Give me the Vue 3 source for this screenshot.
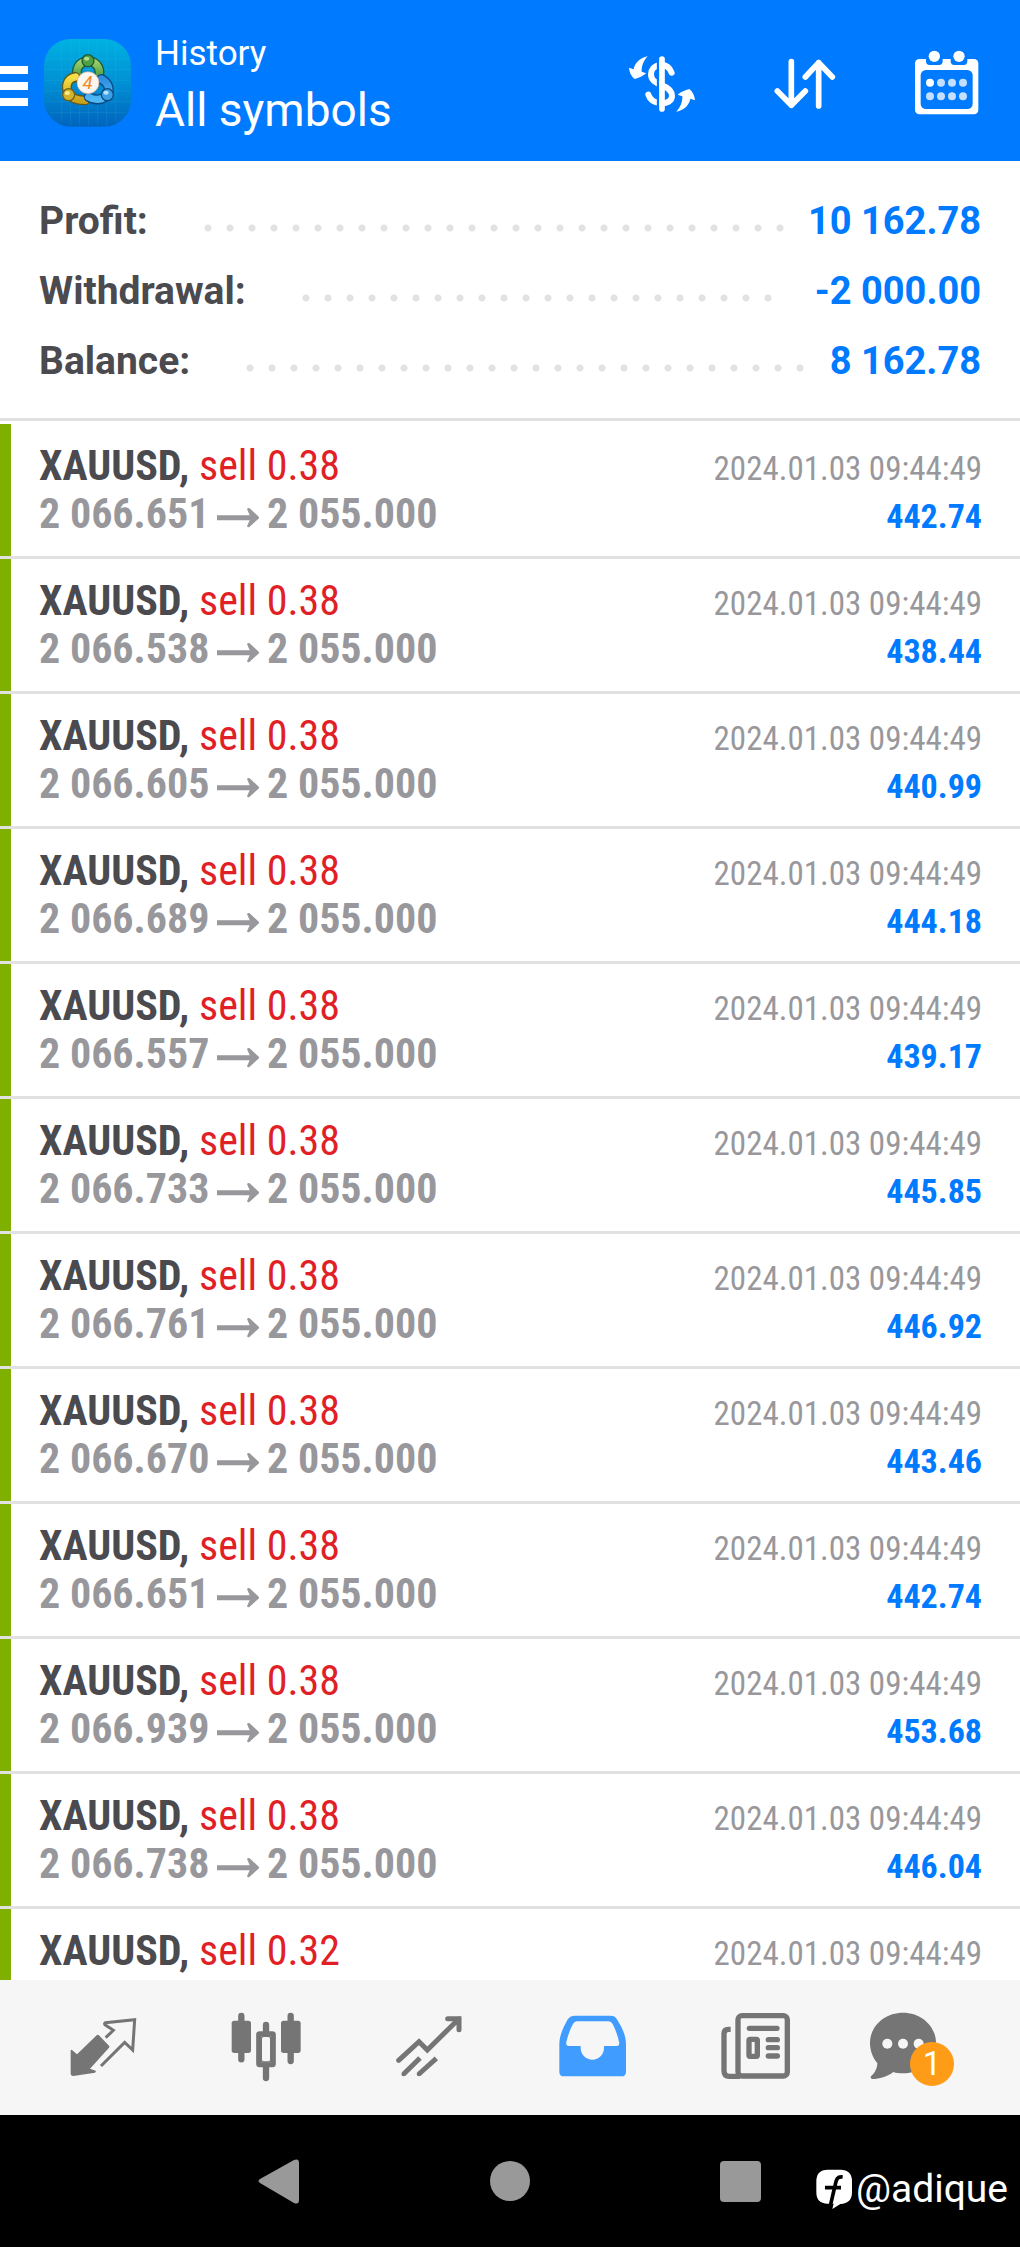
<script setup>
const summary = [
  { label: 'Profit:', value: '10 162.78' },
  { label: 'Withdrawal:', value: '-2 000.00' },
  { label: 'Balance:', value: '8 162.78' },
]

const time = '2024.01.03 09:44:49'
const trades = [
  { volume: '0.38', open: '2 066.651', profit: '442.74' },
  { volume: '0.38', open: '2 066.538', profit: '438.44' },
  { volume: '0.38', open: '2 066.605', profit: '440.99' },
  { volume: '0.38', open: '2 066.689', profit: '444.18' },
  { volume: '0.38', open: '2 066.557', profit: '439.17' },
  { volume: '0.38', open: '2 066.733', profit: '445.85' },
  { volume: '0.38', open: '2 066.761', profit: '446.92' },
  { volume: '0.38', open: '2 066.670', profit: '443.46' },
  { volume: '0.38', open: '2 066.651', profit: '442.74' },
  { volume: '0.38', open: '2 066.939', profit: '453.68' },
  { volume: '0.38', open: '2 066.738', profit: '446.04' },
  { volume: '0.32', open: '', profit: '' },
]
</script>

<template>
  <div class="app">
    <header class="bar">
      <button class="menu" aria-label="Menu"><i></i><i></i><i></i></button>
      <svg class="logo" viewBox="132 120 261 261" aria-hidden="true">
        <defs>
          <linearGradient id="tile" x1="0" y1="0" x2="0" y2="1">
            <stop offset="0" stop-color="#00b2e2" />
            <stop offset="0.5" stop-color="#0090d4" />
            <stop offset="1" stop-color="#0064bd" />
          </linearGradient>
          <linearGradient id="green" x1="0" y1="0" x2="0" y2="1">
            <stop offset="0" stop-color="#9fd06a" />
            <stop offset="1" stop-color="#3f9440" />
          </linearGradient>
          <linearGradient id="gold" x1="0" y1="0" x2="0" y2="1">
            <stop offset="0" stop-color="#f6e04a" />
            <stop offset="1" stop-color="#c9a21c" />
          </linearGradient>
          <linearGradient id="sky" x1="0" y1="0" x2="0" y2="1">
            <stop offset="0" stop-color="#2f8fe0" />
            <stop offset="1" stop-color="#4fb8f5" />
          </linearGradient>
        </defs>
        <rect x="132" y="120" width="261" height="263" rx="80" fill="url(#tile)" />
        <path
          d="M185 135V368M212 122V380M239 122V380M266 122V380M293 122V380M320 122V380M347 135V368M140 180H386M134 212H392M134 244H392M134 276H392M136 308H390M150 340H376"
          stroke="#5cc8ee" stroke-opacity="0.2" stroke-width="2" fill="none"
        />
        <g fill="none" stroke-linecap="round">
          <path d="M236 238C222 212 238 188 264 186C292 188 306 212 294 240" stroke="#1d5b3c" stroke-width="30" />
          <path d="M236 238C222 212 238 188 264 186C292 188 306 212 294 240" stroke="url(#green)" stroke-width="22" />
          <path d="M226 234C202 238 194 262 206 284C216 302 238 304 256 304" stroke="#5c5a1c" stroke-width="30" />
          <path d="M226 234C202 238 194 262 206 284C216 302 238 304 256 304" stroke="url(#gold)" stroke-width="22" />
          <path d="M304 240C326 252 334 274 318 292C304 304 282 304 266 294" stroke="#0b4a86" stroke-width="30" />
          <path d="M304 240C326 252 334 274 318 292C304 304 282 304 266 294" stroke="url(#sky)" stroke-width="22" />
        </g>
        <circle cx="264" cy="185" r="18" fill="#4f9f46" stroke="#1f5c33" stroke-width="4" />
        <ellipse cx="260" cy="179" rx="8" ry="6" fill="#b4dc8c" />
        <circle cx="206" cy="287" r="18" fill="#d3b32c" stroke="#6f601b" stroke-width="4" />
        <ellipse cx="202" cy="282" rx="8" ry="6" fill="#f6ec90" />
        <circle cx="322" cy="287" r="18" fill="#3c9fe4" stroke="#0d4a82" stroke-width="4" />
        <ellipse cx="318" cy="281" rx="8" ry="6" fill="#b6e2fb" />
        <circle cx="264" cy="251" r="33" fill="#fbf6f0" stroke="#c9a48c" stroke-width="2" />
        <text x="263" y="271" class="mark">4</text>
      </svg>
      <div class="titles">
        <div class="sub">History</div>
        <h1>All symbols</h1>
      </div>
      <div class="actions">
        <button aria-label="Currency">
          <svg viewBox="78 75 213 213">
            <path
              d="M215 158C208 138 192 134 180 135C162 137 153 150 153 163C153 181 166 188 186 196C205 203 216 212 216 228C216 243 200 251 184 250C165 249 150 240 145 224"
              fill="none" stroke="#fff" stroke-width="18" stroke-linecap="round"
            />
            <path d="M174 105V278" stroke="#007aff" stroke-width="7" />
            <path d="M186 117V267" stroke="#fff" stroke-width="17" stroke-linecap="round" />
            <path d="M143 109C118 114 104 130 101 148L87 143C88 158 95 170 104 177C116 174 130 168 139 160L125 155C124 138 132 120 143 109Z" fill="#fff" />
            <path d="M229 275C254 270 268 254 271 236L285 241C284 226 277 214 268 207C256 210 242 216 233 224L247 229C248 246 240 264 229 275Z" fill="#fff" />
          </svg>
        </button>
        <button aria-label="Sort">
          <svg viewBox="504 75 213 213">
            <path
              d="M574 125V256M532 213L574 256L616 213M656 258V128M616 171L656 128L697 171"
              fill="none" stroke="#fff" stroke-width="17" stroke-linecap="round" stroke-linejoin="round"
            />
          </svg>
        </button>
        <button aria-label="Period">
          <svg viewBox="930 75 213 213">
            <rect x="945" y="117" width="190" height="166" rx="13" fill="#fff" />
            <rect x="962" y="150" width="156" height="117" rx="16" fill="#007aff" />
            <path d="M978 112H1028V124Q1028 135 1017 135H989Q978 135 978 124ZM1052 112H1102V124Q1102 135 1091 135H1063Q1052 135 1052 124Z" fill="#007aff" />
            <circle cx="1003" cy="109" r="17" fill="#fff" />
            <circle cx="1077" cy="109" r="17" fill="#fff" />
            <circle cx="990" cy="188" r="12" fill="#fff" />
            <g fill="#c4dfff">
              <circle cx="1023" cy="188" r="12" />
              <circle cx="1056" cy="188" r="12" />
              <circle cx="1089" cy="188" r="12" />
              <circle cx="990" cy="229" r="12" />
              <circle cx="1023" cy="229" r="12" />
              <circle cx="1056" cy="229" r="12" />
              <circle cx="1089" cy="229" r="12" />
            </g>
          </svg>
        </button>
      </div>
    </header>

    <dl class="summary">
      <div v-for="s in summary" :key="s.label" class="sum">
        <dt>{{ s.label }}</dt>
        <span class="dots" aria-hidden="true"><i v-for="n in 40" :key="n"></i></span>
        <dd>{{ s.value }}</dd>
      </div>
    </dl>

    <ul class="trades">
      <li v-for="(t, i) in trades" :key="i">
        <div class="line">
          <span class="deal"><b>XAUUSD,</b> <span class="sell">sell {{ t.volume }}</span></span>
          <time>{{ time }}</time>
        </div>
        <div v-if="t.open" class="line">
          <span class="prices">
            <span class="open">{{ t.open }}</span>
            <svg viewBox="0 0 126 60" aria-label="to">
              <path d="M0 22H98L90 3Q94 -2 98 1L126 27V31L98 56Q94 60 90 55L98 37H0Z" fill="currentColor" />
            </svg>
            <span>2 055.000</span>
          </span>
          <span class="profit">{{ t.profit }}</span>
        </div>
      </li>
    </ul>

    <nav class="tabs">
      <button aria-label="Quotes">
        <svg viewBox="204 396 213 213">
          <path d="M291 465Q293 463 296 465L327 497Q330 500 327 503L270 566L287 572Q289 575 285 578L220 588Q212 588 212 580V511Q214 508 217 511L231 523Z" fill="#757575" />
          <path
            d="M317 473L340 451L316 435Q311 431 316 428L404 419L398 510L374 487L303 558"
            fill="none" stroke="#757575" stroke-width="9"
          />
        </svg>
      </button>
      <button aria-label="Charts">
        <svg viewBox="693 396 213 213" fill="#757575">
          <rect x="695" y="422" width="58" height="97" rx="8" />
          <path d="M724 408V538M872 408V543M798 435V455M798 560V594" stroke="#757575" stroke-width="19" stroke-linecap="round" />
          <rect x="843" y="422" width="59" height="97" rx="8" />
          <rect x="776" y="461" width="44" height="93" rx="3" fill="#f6f6f6" stroke="#757575" stroke-width="15" />
          <rect x="784" y="469" width="28" height="77" rx="7" fill="#f6f6f6" stroke="#757575" stroke-width="4" />
        </svg>
      </button>
      <button aria-label="Trade">
        <svg viewBox="162 156 213 213">
          <path
            d="M176 301L237 245L262 270L357 176M323 176H357V209"
            fill="none" stroke="#757575" stroke-width="15" stroke-linecap="round"
          />
          <path d="M191 342L240 294M237 342L289 295" fill="none" stroke="#757575" stroke-width="15" />
          <circle cx="191" cy="342" r="7" fill="#757575" />
          <circle cx="237" cy="342" r="7" fill="#757575" />
        </svg>
      </button>
      <button aria-label="History" aria-current="page">
        <svg viewBox="651 156 213 213">
          <path
            fill-rule="evenodd" fill="#409cff"
            d="M705 167H811Q827 167 832 180C846 203 858 225 858 254V335Q858 349 844 349H672Q658 349 658 335V254C658 225 670 203 682 180Q689 167 705 167ZM711 184Q703 184 699 192C690 208 684 226 679 246Q677 258 687 258H722V264A35 35 0 0 0 792 264V258H830Q840 258 837 246C833 226 826 208 818 192Q814 184 806 184Z"
          />
        </svg>
      </button>
      <button aria-label="News">
        <svg viewBox="120 156 213 213" fill="none" stroke="#757575" stroke-width="16">
          <rect x="174" y="167" width="148" height="181" rx="12" />
          <path d="M152 208H145Q132 208 132 222V332Q132 349 148 349H180" />
          <path d="M208 205H291M265 239H292M265 263H292M265 288H292" stroke-linecap="round" />
          <rect x="207" y="238" width="25" height="51" rx="3" />
        </svg>
      </button>
      <button class="chat" aria-label="Messages">
        <svg viewBox="609 156 213 213">
          <path
            d="M669 158C725 158 768 199 768 249C768 299 725 340 669 340C658 340 648 339 640 336C622 350 598 357 577 357Q570 356 573 349C584 340 592 325 592 309C578 293 570 272 570 249C570 199 613 158 669 158Z"
            fill="#757575"
          />
          <g fill="#f6f6f6">
            <circle cx="622" cy="251" r="15" />
            <circle cx="669" cy="251" r="15" />
            <circle cx="716" cy="251" r="15" />
          </g>
        </svg>
        <span class="badge">1</span>
      </button>
    </nav>

    <footer class="system">
      <button aria-label="Back">
        <svg viewBox="0 0 44 44"><path d="M3 20L37 1Q42 -1 42 4V41Q42 46 37 44L3 24Q0 22 3 20Z" fill="#999" /></svg>
      </button>
      <button aria-label="Home">
        <svg viewBox="0 0 44 44"><circle cx="22" cy="22" r="20" fill="#999" /></svg>
      </button>
      <button aria-label="Recent apps">
        <svg viewBox="0 0 44 44"><rect x="1" y="2" width="41" height="41" rx="4" fill="#999" /></svg>
      </button>
      <div class="handle">
        <svg viewBox="405 184 108 120" aria-hidden="true">
          <path d="M440 186H478Q513 186 513 221V254Q513 288 478 289L454 304L458 288H440Q406 288 406 254V221Q406 186 440 186Z" fill="#fff" />
          <path d="M485 208C468 206 466 216 463 230L449 290M432 240H480" fill="none" stroke="#000" stroke-width="11" />
        </svg>
        <span>@adique</span>
      </div>
    </footer>
  </div>
</template>

<style>
body {
  margin: 0;
  background: #fff;
}
</style>

<style scoped>
.app {
  display: flex;
  flex-direction: column;
  height: 100vh;
  overflow: hidden;
  font-family: Roboto, sans-serif;
  color: #4a4a4f;
}
button {
  display: block;
  flex: none;
  padding: 0;
  border: 0;
  background: none;
}
svg {
  display: block;
  overflow: visible;
}
.bar {
  display: flex;
  flex: none;
  align-items: center;
  box-sizing: border-box;
  height: 161px;
  padding-right: 39px;
  background: #007aff;
  color: #fff;
}
.menu {
  display: flex;
  flex-direction: column;
  gap: 8px;
  width: 28px;
  padding-top: 10px;
}
.menu i {
  height: 8px;
  background: #fff;
}
.logo {
  flex: none;
  width: 87px;
  height: 87px;
  margin: 4px 24px 0 16px;
}
.mark {
  fill: #f08a2c;
  font-size: 56px;
  font-style: italic;
  text-anchor: middle;
}
.titles {
  flex: 1;
  padding-top: 10px;
}
.sub {
  font-size: 35px;
  line-height: 48px;
}
h1 {
  margin: 0;
  font-size: 46px;
  font-weight: 400;
  line-height: 64px;
}
.actions {
  display: flex;
  gap: 71px;
}
.actions svg,
.tabs svg {
  width: 71px;
  height: 71px;
}
.summary {
  flex: none;
  margin: 0;
  padding: 25px 39px 22px;
  border-bottom: 3px solid #e1e1e1;
}
.sum {
  display: flex;
  height: 70px;
  font-size: 38px;
  font-weight: 700;
  line-height: 70px;
}
dt {
  font-size: 39px;
}
dd {
  margin: 0;
  color: #007aff;
}
.dots {
  display: flex;
  flex: 1;
  flex-wrap: wrap;
  height: 22px;
  margin: 31px 16px 0 49px;
  overflow: hidden;
}
.dots i {
  width: 22px;
  height: 22px;
  background: radial-gradient(circle, #e2e2e2 3px, transparent 4px);
}
.trades {
  flex: 1;
  min-height: 0;
  margin: 3px 0 0;
  padding: 0;
  overflow: hidden;
  list-style: none;
  font-family: "Roboto Condensed", "Liberation Sans Narrow", Roboto, sans-serif;
}
.trades li {
  box-sizing: border-box;
  height: 135px;
  padding: 18px 38px 0 39px;
  border-bottom: 3px solid #e1e1e1;
  background: linear-gradient(#7fb000, #7fb000) 0 0 / 11px 100% no-repeat;
}
.line {
  display: flex;
  align-items: baseline;
  justify-content: space-between;
  height: 48px;
  line-height: 48px;
  font-size: 42px;
  white-space: nowrap;
}
.sell {
  color: #e01f26;
}
.prices {
  display: flex;
  align-items: baseline;
  color: #98989c;
  font-weight: 700;
}
.open {
  width: 178px;
}
.prices svg {
  width: 42px;
  height: 20px;
  margin: 0 8px 3px 0;
}
time {
  color: #98989c;
  font-size: 33px;
}
.profit {
  color: #007aff;
  font-size: 34px;
  font-weight: 700;
}
.tabs {
  display: flex;
  flex: none;
  align-items: center;
  justify-content: space-between;
  height: 135px;
  padding: 0 66px 0 68px;
  background: #f6f6f6;
}
.chat {
  position: relative;
}
.badge {
  position: absolute;
  top: 30px;
  left: 27px;
  width: 44px;
  height: 44px;
  border-radius: 50%;
  background: #ff9c17;
  color: #fff;
  font-family: Roboto, sans-serif;
  font-size: 33px;
  line-height: 44px;
  text-align: center;
}
.system {
  position: relative;
  display: flex;
  flex: none;
  align-items: center;
  justify-content: center;
  gap: 187px;
  height: 132px;
  background: #000;
}
.system button svg {
  width: 44px;
  height: 44px;
}
.handle {
  position: absolute;
  right: 12px;
  bottom: 34px;
  display: flex;
  align-items: center;
  gap: 4px;
  color: #fff;
  font-size: 39px;
  line-height: 48px;
}
.handle svg {
  width: 36px;
  height: 40px;
}
</style>
